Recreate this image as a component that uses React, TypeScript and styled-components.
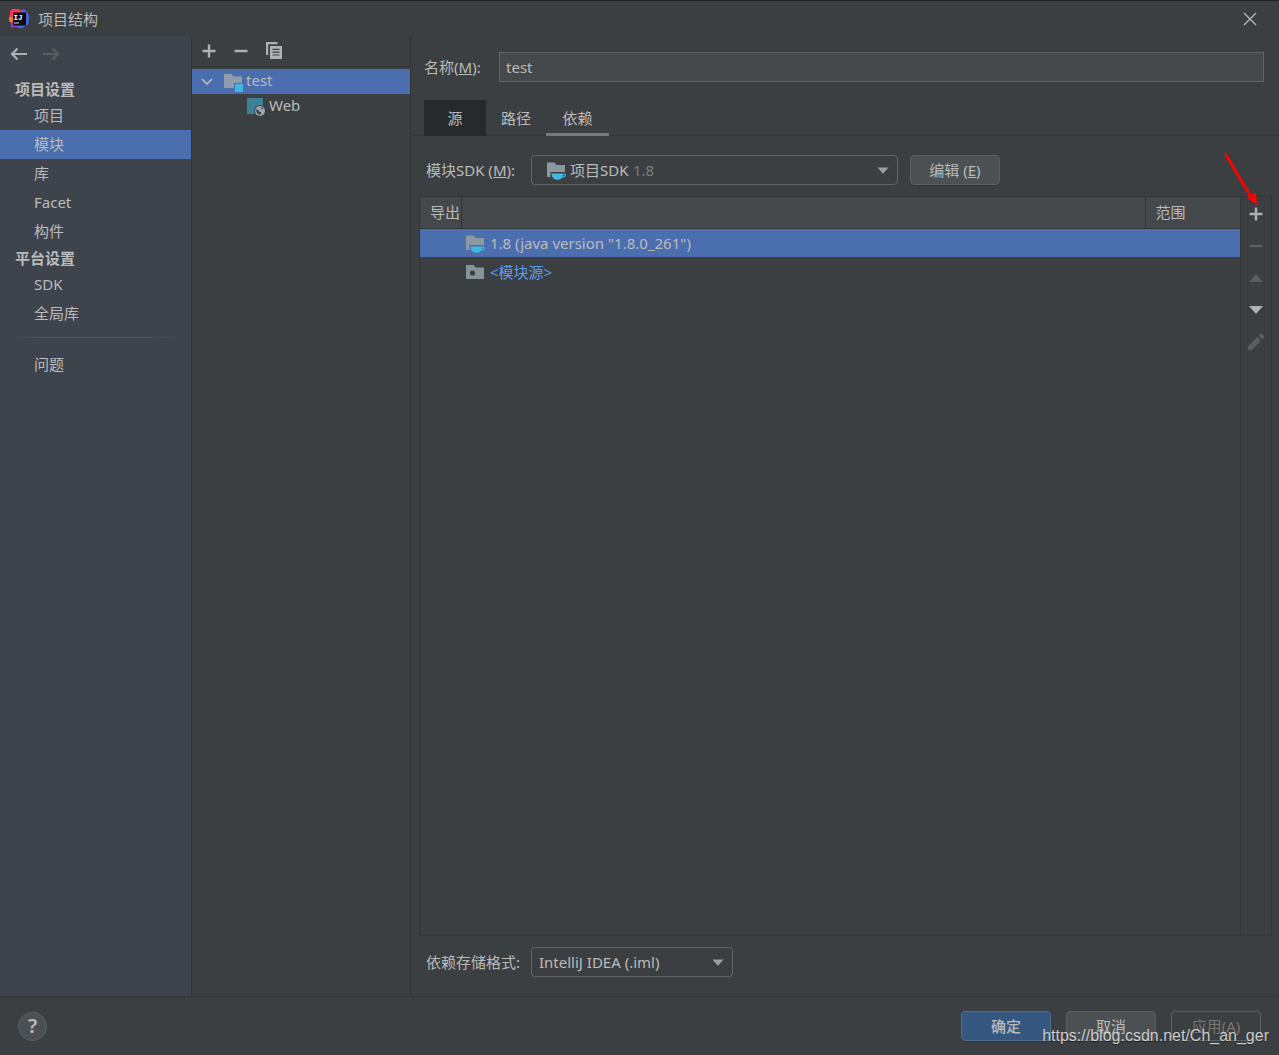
import React from 'react';
import styled, { createGlobalStyle, css } from 'styled-components';

const c = {
  bg: '#3c3f41',
  side: '#3f434c',
  line: '#323435',
  text: '#bbbbbb',
  select: '#4b6eaf',
  icon: '#afb1b3',
  dim: '#5b5d5f',
};

const GlobalStyle = createGlobalStyle`
  *, *::before, *::after { box-sizing: border-box; }
  body { margin: 0; background: ${c.bg}; }
  body, button, input, select {
    font-family: "Noto Sans", "Noto Sans CJK SC", sans-serif;
    font-size: 15px;
    line-height: 20px;
    color: ${c.text};
  }
`;

const Window = styled.div`
  position: relative;
  display: flex;
  flex-direction: column;
  min-height: 100vh;
  border-top: 1px solid #1e1f20;
  background: ${c.bg};
`;

const TitleBar = styled.header`
  display: flex;
  align-items: center;
  gap: 8px;
  height: 35px;
  padding: 0 22px 0 8px;
`;

const Title = styled.h1`
  flex: 1;
  margin: 0;
  font-size: 15px;
  font-weight: 400;
`;

const IconButton = styled.button`
  display: flex;
  align-items: center;
  justify-content: center;
  flex: none;
  width: ${(p: { $w?: number }) => p.$w ?? 32}px;
  height: 32px;
  padding: 0;
  border: 0;
  background: none;
  color: ${c.icon};
  &:disabled { color: ${c.dim}; }
`;

const Body = styled.div`
  display: flex;
  flex: 1;
`;

const Sidebar = styled.nav`
  flex: none;
  width: 192px;
  background: ${c.side};
  border-right: 1px solid ${c.line};
`;

const History = styled.div`
  display: flex;
  height: 41px;
  padding: 2px 3px 0;
`;

const GroupTitle = styled.h2`
  margin: 0;
  padding: 0 15px;
  font-size: 15px;
  line-height: 24px;
  font-weight: 700;
`;

const NavList = styled.ul`
  margin: 0;
  padding: 0;
  list-style: none;
`;

const NavLink = styled.a<{ $active?: boolean }>`
  display: block;
  height: 29px;
  padding: 0 34px;
  line-height: 28px;
  color: ${c.text};
  text-decoration: none;
  background: ${(p) => (p.$active ? c.select : 'transparent')};
`;

const Divider = styled.hr`
  height: 1px;
  margin: 9px 10px 12px;
  border: 0;
  background: linear-gradient(90deg, transparent, #515457 20%, #515457 80%, transparent);
`;

const TreePane = styled.section`
  flex: none;
  width: 219px;
  border-right: 1px solid ${c.line};
`;

const Toolbar = styled.div`
  display: flex;
  height: 31px;
  padding: 0 1px;
  align-items: center;
  border-bottom: 1px solid ${c.line};
`;

const Tree = styled.ul`
  margin: 0;
  padding: 2px 0;
  list-style: none;
`;

const TreeRow = styled.li<{ $active?: boolean; $depth: number }>`
  display: flex;
  align-items: center;
  gap: 3px;
  height: 25px;
  padding-left: ${(p) => 8 + p.$depth * 46}px;
  background: ${(p) => (p.$active ? c.select : 'transparent')};
  span { padding-bottom: 3px; }
`;

const TreeIcon = styled.i`
  display: flex;
  padding-left: 6px;
`;

const Editor = styled.main`
  display: flex;
  flex-direction: column;
  flex: 1;
  min-width: 0;
`;

const NameRow = styled.div`
  display: flex;
  align-items: center;
  height: 64px;
  padding: 0 15px 2px 13px;
`;

const NameLabel = styled.label`
  flex: none;
  width: 75px;
`;

const TextField = styled.input`
  flex: 1;
  min-width: 0;
  height: 30px;
  padding: 0 6px;
  border: 1px solid #646464;
  border-radius: 0;
  background: #45494a;
  outline: 0;
`;

const Tabs = styled.div`
  display: flex;
  height: 36px;
  padding-left: 13px;
  border-bottom: 1px solid ${c.line};
`;

const Tab = styled.button<{ $hover?: boolean }>`
  height: 36px;
  min-width: 60px;
  padding: 0 15px;
  border: 0;
  background: none;
  ${(p) =>
    p.$hover &&
    css`
      width: 62px;
      background: #27292a;
    `}
  &[aria-selected='true'] {
    width: 63px;
    box-shadow: inset 0 -3px #747a80;
  }
`;

const FormRow = styled.div<{ $top: number; $bottom: number }>`
  display: flex;
  align-items: center;
  padding: ${(p) => p.$top}px 15px ${(p) => p.$bottom}px;
`;

const FormLabel = styled.label`
  flex: none;
  width: 105px;
`;

const Combo = styled.div<{ $w: number; $pad: number }>`
  display: flex;
  align-items: center;
  flex: none;
  width: ${(p) => p.$w}px;
  height: 30px;
  padding: 0 8px 0 ${(p) => p.$pad}px;
  border: 1px solid #646464;
  border-radius: 4px;
  color: #9c9ea0;
  svg:last-child { margin-left: auto; }
`;

const ComboIcon = styled.i`
  display: flex;
  padding-right: 4px;
`;

const Picker = styled.select<{ $fill?: boolean }>`
  appearance: none;
  ${(p) => p.$fill && 'flex: 1;'}
  padding: 0;
  border: 0;
  outline: 0;
  background: transparent;
`;

const Version = styled.span`
  padding-left: 4px;
  color: #7d7f80;
`;

const Button = styled.button<{ $primary?: boolean }>`
  flex: none;
  width: 90px;
  height: 30px;
  padding: 0;
  border: 1px solid #5e6060;
  border-radius: 4px;
  background: #4c5052;
  box-shadow: 0 1px 1px rgba(0, 0, 0, 0.15);
  ${(p) =>
    p.$primary &&
    css`
      border-color: #4c708c;
      background: #365880;
      font-weight: 500;
    `}
  &:disabled {
    color: #777777;
    background: none;
    box-shadow: none;
  }
`;

const EditSlot = styled.div`
  display: flex;
  padding-left: 12px;
`;

const Panel = styled.div`
  display: flex;
  flex: 1;
  margin: 0 7px 0 8px;
  border: 1px solid ${c.line};
`;

const TableArea = styled.div`
  flex: 1;
  min-width: 0;
`;

const Table = styled.table`
  width: 100%;
  table-layout: fixed;
  border-collapse: collapse;
  th {
    height: 31px;
    padding: 0 0 0 10px;
    text-align: left;
    font-weight: 400;
    white-space: nowrap;
    background: #45484a;
    border-bottom: 1px solid ${c.line};
  }
  th + th { border-left: 1px solid ${c.line}; }
  td {
    height: 29px;
    padding: 0 0 0 4px;
  }
`;

const BodyRow = styled.tr<{ $active?: boolean }>`
  background: ${(p) => (p.$active ? c.select : 'transparent')};
`;

const Entry = styled.div<{ $link?: boolean }>`
  display: flex;
  align-items: center;
  gap: 5px;
  color: ${(p) => (p.$link ? '#589df6' : c.text)};
`;

const Actions = styled.div`
  position: relative;
  flex: none;
  width: 31px;
  padding-top: 1px;
  border-left: 1px solid ${c.line};
`;

const Pointer = styled.svg`
  position: absolute;
  top: -46px;
  left: -18px;
  pointer-events: none;
`;

const Footer = styled.footer`
  display: flex;
  align-items: center;
  gap: 15px;
  height: 59px;
  padding: 0 18px;
  border-top: 1px solid ${c.line};
`;

const Help = styled.button`
  width: 29px;
  height: 29px;
  margin-right: auto;
  padding: 0;
  border: 1px solid #5e6060;
  border-radius: 50%;
  background: #4c5052;
  font-size: 20px;
  font-weight: 600;
`;

const Watermark = styled.div`
  position: absolute;
  right: 10px;
  bottom: 9px;
  font-family: "Liberation Sans", Arial, sans-serif;
  font-size: 16px;
  color: rgba(255, 255, 255, 0.75);
  text-shadow: 0 1px 1px rgba(0, 0, 0, 0.4);
  pointer-events: none;
`;

const Logo = () => (
  <svg width="22" height="22" viewBox="0 0 22 22" aria-hidden="true">
    <path d="M2.5 2.500 4 1h7l3 3-4 8-8 1.500-1-3z" fill="#fe315d" />
    <path d="M1 9.500 7 8v8l-5.500-2z" fill="#f97a12" />
    <path d="M3 14h9v6l-4-1-5 .5z" fill="#a63ac4" />
    <path d="m13 2.500 3-1.700L21 7l-.5 9-7 4.700-5-2.700 5-8z" fill="#3f6be0" />
    <path d="m14 3 5 3-1 9z" fill="#5b53d0" />
    <rect x="5" y="4.500" width="13" height="13" fill="#090909" />
    <text x="5.500" y="11.500" fontSize="7.500" fontWeight="700" fontFamily="Liberation Mono, monospace" fill="#fff">IJ</text>
    <rect x="6" y="14.500" width="5" height="1" fill="#ddd" />
  </svg>
);

const Close = () => (
  <svg width="14" height="14" viewBox="0 0 14 14" stroke={c.text} strokeWidth="1.2">
    <path d="m1 1 12 12M13 1 1 13" />
  </svg>
);

const Arrow = ({ back }: { back?: boolean }) => (
  <svg width="18" height="14" viewBox="0 0 18 14" fill="none" stroke="currentColor" strokeWidth="2.2">
    <path d={back ? 'M17 7H2M7.5 1.500 2 7l5.500 5.500' : 'M1 7h15M10.500 1.500 16 7l-5.500 5.500'} />
  </svg>
);

const Plus = () => (
  <svg width="14" height="14" viewBox="0 0 14 14" stroke="currentColor" strokeWidth="2.4">
    <path d="M7 .5v13M.5 7h13" />
  </svg>
);

const Minus = () => (
  <svg width="14" height="14" viewBox="0 0 14 14" stroke="currentColor" strokeWidth="2.4">
    <path d="M.5 7h13" />
  </svg>
);

const Copy = () => (
  <svg width="18" height="18" viewBox="0 0 18 18" fill="currentColor">
    <path d="M2 0h11.500v2.200H4.200v10.800H2z" />
    <path fillRule="evenodd" d="M6 4h12v13H6zM8.500 6.800v1.200h7V6.800zm0 2.800v1.200h7V9.600zm0 2.800v1.200h7v-1.200z" />
  </svg>
);

const Triangle = ({ up }: { up?: boolean }) => (
  <svg width="14" height="8" viewBox="0 0 14 8" fill="currentColor">
    <path d={up ? 'M0 8 7 0l7 8z' : 'M0 0h14L7 8z'} />
  </svg>
);

const Caret = () => (
  <svg width="12" height="7" viewBox="0 0 12 7" fill="currentColor">
    <path d="M.5 .5h11L6 6.800z" />
  </svg>
);

const Pencil = () => (
  <svg width="18" height="18" viewBox="0 0 18 18" fill="currentColor">
    <path d="M.8 13.500 10.300 4l3.700 3.700L4.500 17.200H.8zM11.500 2.800l1.800-1.800q.8-.6 1.600 0l2.100 2.100q.6.800 0 1.600l-1.800 1.800z" />
  </svg>
);

const Chevron = () => (
  <svg width="14" height="14" viewBox="0 0 14 14" fill="none" stroke={c.text} strokeWidth="1.600">
    <path d="m2 4 5 5 5-5" />
  </svg>
);

const ModuleFolder = () => (
  <svg width="20" height="20" viewBox="0 0 20 20">
    <path d="M1 2h7.500l2 2.500H19V11h-8v5H1z" fill="#8f9dad" />
    <rect x="12" y="12" width="8" height="8" fill="#40b6e0" />
  </svg>
);

const JdkFolder = () => (
  <svg width="20" height="20" viewBox="0 0 20 20">
    <path d="M1 2.500h7.500l2 2.500H19v7H4.500v5H1z" fill="#8b98a2" />
    <path d="M5.500 13.500H18q2 0 2 1.800t-2.500 2.200h-1.300q-1.400 2.200-3.200 2.200h-2.500q-4.500-.2-5-6.200zm11.500 1.200-.2 1.600h.8q1 0 1-.8t-.8-.8z" fill="#40b6e0" fillRule="evenodd" />
  </svg>
);

const SourceFolder = () => (
  <svg width="20" height="20" viewBox="0 0 20 20">
    <path d="M1 3h7.500l2 2.500H19V17H1z" fill="#87939a" />
    <circle cx="7.500" cy="11" r="2.600" fill={c.bg} />
  </svg>
);

const WebFacet = () => (
  <svg width="20" height="20" viewBox="0 0 20 20">
    <rect x="1" y="1" width="16" height="16" fill="#3d8199" />
    <circle cx="14" cy="14" r="6" fill={c.bg} />
    <circle cx="14" cy="14" r="5" fill="#9aa7b0" />
    <path d="M10 12.500q2-.5 2.500 1t2 1.500-.5 3q-3.500-1-4-5.500zM14.500 10q.5 2 2.500 2l1 .5q-1-2.500-3.500-2.500z" fill={c.bg} />
  </svg>
);

const projectItems = ['项目', '模块', '库', 'Facet', '构件'];
const platformItems = ['SDK', '全局库'];

const NavGroup = ({ items }: { items: string[] }) => (
  <NavList>
    {items.map((item) => (
      <li key={item}>
        <NavLink href="#" $active={item === '模块'}>{item}</NavLink>
      </li>
    ))}
  </NavList>
);

export default function App() {
  return (
    <Window>
      <GlobalStyle />
      <TitleBar>
        <Logo />
        <Title>项目结构</Title>
        <IconButton $w={14} aria-label="关闭"><Close /></IconButton>
      </TitleBar>
      <Body>
        <Sidebar>
          <History>
            <IconButton aria-label="后退"><Arrow back /></IconButton>
            <IconButton aria-label="前进" disabled><Arrow /></IconButton>
          </History>
          <GroupTitle>项目设置</GroupTitle>
          <NavGroup items={projectItems} />
          <GroupTitle>平台设置</GroupTitle>
          <NavGroup items={platformItems} />
          <Divider />
          <NavGroup items={['问题']} />
        </Sidebar>
        <TreePane>
          <Toolbar>
            <IconButton aria-label="添加"><Plus /></IconButton>
            <IconButton aria-label="删除"><Minus /></IconButton>
            <IconButton aria-label="复制"><Copy /></IconButton>
          </Toolbar>
          <Tree>
            <TreeRow $active $depth={0}>
              <Chevron />
              <TreeIcon><ModuleFolder /></TreeIcon>
              <span>test</span>
            </TreeRow>
            <TreeRow $depth={1}>
              <WebFacet />
              <span>Web</span>
            </TreeRow>
          </Tree>
        </TreePane>
        <Editor>
          <NameRow>
            <NameLabel htmlFor="name">名称(<u>M</u>):</NameLabel>
            <TextField id="name" defaultValue="test" />
          </NameRow>
          <Tabs role="tablist">
            <Tab role="tab" aria-selected="false" $hover>源</Tab>
            <Tab role="tab" aria-selected="false">路径</Tab>
            <Tab role="tab" aria-selected="true">依赖</Tab>
          </Tabs>
          <FormRow $top={19} $bottom={11}>
            <FormLabel htmlFor="sdk">模块SDK (<u>M</u>):</FormLabel>
            <Combo $w={367} $pad={14}>
              <ComboIcon><JdkFolder /></ComboIcon>
              <Picker id="sdk"><option>项目SDK</option></Picker>
              <Version>1.8</Version>
              <Caret />
            </Combo>
            <EditSlot><Button>编辑 (<u>E</u>)</Button></EditSlot>
          </FormRow>
          <Panel>
            <TableArea>
              <Table>
                <colgroup>
                  <col width="41" />
                  <col />
                  <col width="95" />
                </colgroup>
                <thead>
                  <tr>
                    <th>导出</th>
                    <th aria-label="依赖" />
                    <th>范围</th>
                  </tr>
                </thead>
                <tbody>
                  <BodyRow $active>
                    <td />
                    <td><Entry><JdkFolder />1.8 (java version "1.8.0_261")</Entry></td>
                    <td />
                  </BodyRow>
                  <BodyRow>
                    <td />
                    <td><Entry $link><SourceFolder />&lt;模块源&gt;</Entry></td>
                    <td />
                  </BodyRow>
                </tbody>
              </Table>
            </TableArea>
            <Actions>
              <IconButton $w={30} aria-label="添加依赖"><Plus /></IconButton>
              <IconButton $w={30} aria-label="移除依赖" disabled><Minus /></IconButton>
              <IconButton $w={30} aria-label="上移" disabled><Triangle up /></IconButton>
              <IconButton $w={30} aria-label="下移"><Triangle /></IconButton>
              <IconButton $w={30} aria-label="编辑依赖" disabled><Pencil /></IconButton>
              <Pointer width="36" height="56" viewBox="0 0 36 56">
                <path d="M3 4 28 46" stroke="#fe0000" strokeWidth="3" strokeLinecap="round" />
                <path d="M34 54 24 47l9-6z" fill="#fe0000" />
              </Pointer>
            </Actions>
          </Panel>
          <FormRow $top={11} $bottom={19}>
            <FormLabel htmlFor="format">依赖存储格式:</FormLabel>
            <Combo $w={202} $pad={7}>
              <Picker id="format" $fill><option>IntelliJ IDEA (.iml)</option></Picker>
              <Caret />
            </Combo>
          </FormRow>
        </Editor>
      </Body>
      <Footer>
        <Help aria-label="帮助">?</Help>
        <Button $primary>确定</Button>
        <Button>取消</Button>
        <Button disabled>应用(A)</Button>
      </Footer>
      <Watermark>https://blog.csdn.net/Ch_an_ger</Watermark>
    </Window>
  );
}
